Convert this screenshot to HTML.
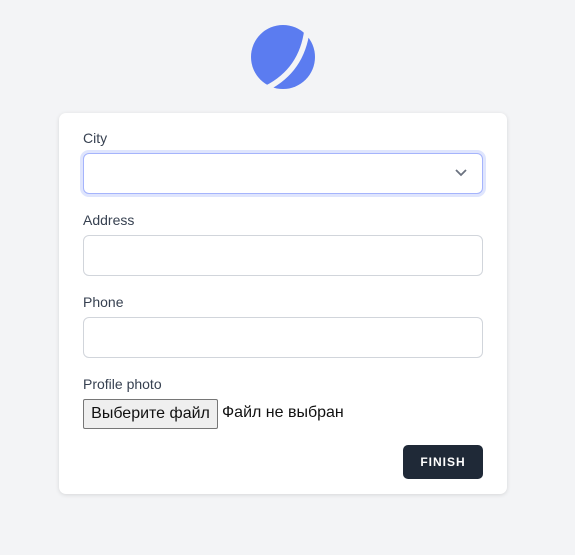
<!DOCTYPE html>
<html><head><meta charset="utf-8"><style>
body{margin:0;width:575px;height:555px;background:#f3f4f6;font-family:"Liberation Sans",sans-serif;position:relative;overflow:hidden}
.card{position:absolute;left:59px;top:113px;width:448px;height:381px;background:#fff;border-radius:7px;box-shadow:0 1px 4px rgba(0,0,0,.12)}
.lbl{position:absolute;left:24px;font-size:14px;color:#374151}
.inp{position:absolute;left:24px;width:398px;height:39px;border:1px solid #d1d5db;border-radius:6px;background:#fff}
.sel{border-color:#a5b4fc;box-shadow:0 0 0 3px #dfe5fd}
.file{position:absolute;left:24px;top:286px;width:400px;height:30px;font-size:16px;color:#111}
.fb{position:absolute;left:0;top:0;width:135px;height:30px;border:1px solid #767676;border-radius:2px;background:#efefef;box-sizing:border-box;line-height:28px;text-align:center}
.btn{position:absolute;left:344px;top:332px;width:80px;height:34px;background:#1f2937;border-radius:5px;color:#fff;font-size:12px;font-weight:bold;letter-spacing:1px;text-align:center;line-height:34px}
</style></head><body>
<svg style="position:absolute;left:0;top:0" width="575" height="100">
<circle cx="283" cy="57" r="32" fill="#5b7cf0"/>
<path d="M307 30 Q302 70 267 88" stroke="#f3f4f6" stroke-width="5.5" fill="none"/>
</svg>
<div class="card">
<div class="lbl" style="top:17px">City</div>
<div class="inp sel" style="top:40px"><svg style="position:absolute;right:14px;top:14px" width="14" height="10"><path d="M2 2 L7 7 L12 2" stroke="#6b7280" stroke-width="1.8" fill="none"/></svg></div>
<div class="lbl" style="top:99px">Address</div>
<div class="inp" style="top:122px"></div>
<div class="lbl" style="top:181px">Phone</div>
<div class="inp" style="top:204px"></div>
<div class="lbl" style="top:263px">Profile photo</div>
<div class="file"><div class="fb">Выберите файл</div><span style="position:absolute;left:139px;top:5px">Файл не выбран</span></div>
<div class="btn">FINISH</div>
</div>
</body></html>
